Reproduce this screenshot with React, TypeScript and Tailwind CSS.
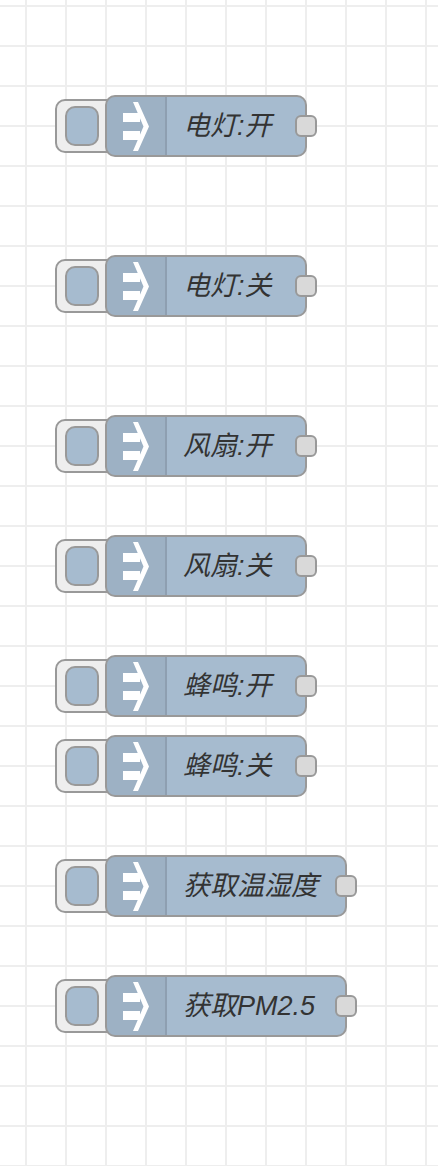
import React from 'react';

interface FlowNode {
  label: string;
  top: number;
  wide?: boolean;
}

const nodes: FlowNode[] = [
  { label: '电灯:开', top: 95 },
  { label: '电灯:关', top: 255 },
  { label: '风扇:开', top: 415 },
  { label: '风扇:关', top: 535 },
  { label: '蜂鸣:开', top: 655 },
  { label: '蜂鸣:关', top: 735 },
  { label: '获取温湿度', top: 855, wide: true },
  { label: '获取PM2.5', top: 975, wide: true },
];

function InjectIcon() {
  return (
    <svg width="60" height="60" viewBox="0 0 60 60" className="block">
      <rect x="16" y="16" width="17" height="9" fill="#fff" />
      <rect x="16" y="34" width="17" height="9" fill="#fff" />
      <polygon points="26,5 31,5 42,29.5 31,54 26,54 36.5,29.5" fill="#fff" />
    </svg>
  );
}

function InjectNode({ label, top, wide }: FlowNode) {
  return (
    <div className="absolute left-[55px] flex items-center" style={{ top }}>
      {/* button */}
      <div className="w-[66px] h-[54px] -mr-[16px] shrink-0 rounded-[10px] border-2 border-[#999999] bg-[#eeeeee] pl-[8px] pt-[5px]">
        <div className="w-[34px] h-[40px] rounded-[10px] border-2 border-[#999999] bg-[#a6bbcf]" />
      </div>
      {/* body */}
      <div
        className={`relative h-[62px] ${wide ? 'w-[242px]' : 'w-[202px]'} rounded-[10px] border-2 border-[#999999] bg-[#a6bbcf] flex`}
      >
        <div className="w-[60px] h-full shrink-0 rounded-l-[8px] bg-black/5 border-r-2 border-black/10">
          <InjectIcon />
        </div>
        <div className="flex-1 flex items-center pl-[16px] text-[27px] italic text-[#333333] leading-none [font-family:'Liberation_Sans','Noto_Sans_CJK_SC',sans-serif]">
          {label}
        </div>
      </div>
      {/* output port */}
      <div className="relative -ml-[12px] w-[22px] h-[22px] shrink-0 rounded-[6px] border-2 border-[#999999] bg-[#d9d9d9]" />
    </div>
  );
}

export default function App() {
  return (
    <div className="relative w-[438px] h-[1166px] overflow-hidden bg-white bg-[linear-gradient(to_right,#eeeeee_2px,transparent_2px),linear-gradient(to_bottom,#eeeeee_2px,transparent_2px)] bg-[size:40px_40px] bg-[position:25px_5px]">
      {nodes.map((n) => (
        <InjectNode key={n.label} {...n} />
      ))}
    </div>
  );
}
